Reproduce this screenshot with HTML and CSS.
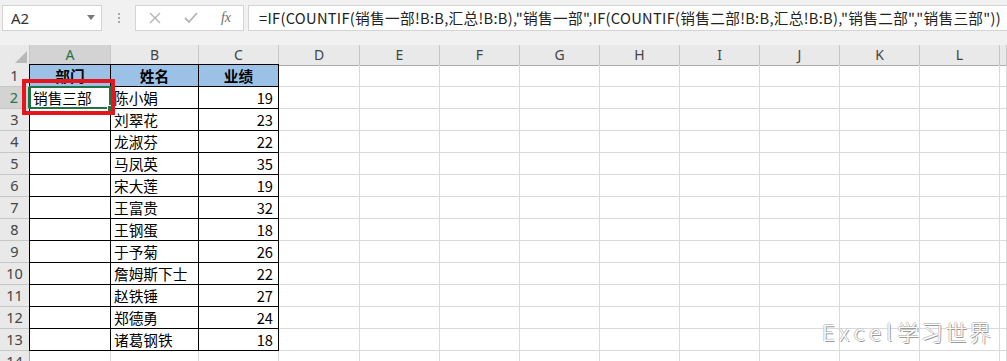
FILE: index.html
```html
<!DOCTYPE html>
<html>
<head>
    <link rel="stylesheet" href="styles.css">
</head>
<body>
    <div class="topbar">
        <div class="namebox">
            <span>A2</span>
            <svg class="drop" width="8" height="5" viewBox="0 0 8 5"><path d="M0 0h8L4 5z" fill="#7a7a7a"/></svg>
        </div>
        <div class="grip"><i></i><i></i><i></i></div>
        <div class="fxbox">
            <svg width="14" height="14" viewBox="0 0 14 14"><path d="M2 2l10 10M12 2L2 12" stroke="#b4b4b4" stroke-width="1.4" fill="none"/></svg>
            <svg width="16" height="14" viewBox="0 0 16 14"><path d="M2 7l4 4 8-9" stroke="#b4b4b4" stroke-width="1.8" fill="none"/></svg>
            <span class="fx">fx</span>
        </div>
        <div class="formula">=IF(COUNTIF(销售一部!B:B,汇总!B:B),"销售一部",IF(COUNTIF(销售二部!B:B,汇总!B:B),"销售二部","销售三部"))</div>
    </div>

    <div class="sheet">
        <div class="row hrow">
            <div class="corner"><svg width="12" height="12" viewBox="0 0 12 12"><path d="M12 0v12H0z" fill="#b8b8b8"/></svg></div>
            <div class="on">A</div><div>B</div><div>C</div><div>D</div><div>E</div><div>F</div><div>G</div><div>H</div><div>I</div><div>J</div><div>K</div><div>L</div><div></div>
        </div>
        <div class="row">
            <div class="rh">1</div><div class="d a top th">部门</div><div class="d top th">姓名</div><div class="d top th">业绩</div>
            <div></div><div></div><div></div><div></div><div></div><div></div><div></div><div></div><div></div><div></div>
        </div>
        <div class="row">
            <div class="rh on">2</div><div class="d a cur">销售三部</div><div class="d">陈小娟</div><div class="d num">19</div>
            <div></div><div></div><div></div><div></div><div></div><div></div><div></div><div></div><div></div><div></div>
        </div>
        <div class="row">
            <div class="rh">3</div><div class="d a"></div><div class="d">刘翠花</div><div class="d num">23</div>
            <div></div><div></div><div></div><div></div><div></div><div></div><div></div><div></div><div></div><div></div>
        </div>
        <div class="row">
            <div class="rh">4</div><div class="d a"></div><div class="d">龙淑芬</div><div class="d num">22</div>
            <div></div><div></div><div></div><div></div><div></div><div></div><div></div><div></div><div></div><div></div>
        </div>
        <div class="row">
            <div class="rh">5</div><div class="d a"></div><div class="d">马凤英</div><div class="d num">35</div>
            <div></div><div></div><div></div><div></div><div></div><div></div><div></div><div></div><div></div><div></div>
        </div>
        <div class="row">
            <div class="rh">6</div><div class="d a"></div><div class="d">宋大莲</div><div class="d num">19</div>
            <div></div><div></div><div></div><div></div><div></div><div></div><div></div><div></div><div></div><div></div>
        </div>
        <div class="row">
            <div class="rh">7</div><div class="d a"></div><div class="d">王富贵</div><div class="d num">32</div>
            <div></div><div></div><div></div><div></div><div></div><div></div><div></div><div></div><div></div><div></div>
        </div>
        <div class="row">
            <div class="rh">8</div><div class="d a"></div><div class="d">王钢蛋</div><div class="d num">18</div>
            <div></div><div></div><div></div><div></div><div></div><div></div><div></div><div></div><div></div><div></div>
        </div>
        <div class="row">
            <div class="rh">9</div><div class="d a"></div><div class="d">于予菊</div><div class="d num">26</div>
            <div></div><div></div><div></div><div></div><div></div><div></div><div></div><div></div><div></div><div></div>
        </div>
        <div class="row">
            <div class="rh">10</div><div class="d a"></div><div class="d">詹姆斯下士</div><div class="d num">22</div>
            <div></div><div></div><div></div><div></div><div></div><div></div><div></div><div></div><div></div><div></div>
        </div>
        <div class="row">
            <div class="rh">11</div><div class="d a"></div><div class="d">赵铁锤</div><div class="d num">27</div>
            <div></div><div></div><div></div><div></div><div></div><div></div><div></div><div></div><div></div><div></div>
        </div>
        <div class="row">
            <div class="rh">12</div><div class="d a"></div><div class="d">郑德勇</div><div class="d num">24</div>
            <div></div><div></div><div></div><div></div><div></div><div></div><div></div><div></div><div></div><div></div>
        </div>
        <div class="row">
            <div class="rh">13</div><div class="d a"></div><div class="d">诸葛钢铁</div><div class="d num">18</div>
            <div></div><div></div><div></div><div></div><div></div><div></div><div></div><div></div><div></div><div></div>
        </div>
        <div class="row">
            <div class="rh">14</div><div></div><div></div><div></div>
            <div></div><div></div><div></div><div></div><div></div><div></div><div></div><div></div><div></div><div></div>
        </div>
    </div>

    <div class="redbox"></div>
    <div class="mark"><span class="en">Excel</span>学习世界</div>
</body>
</html>
```

FILE: styles.css
```css
html, body { margin: 0; height: 100%; overflow: hidden; }
body { font-family: "Noto Sans", "Noto Sans CJK SC", sans-serif; background: #fff; position: relative; }

.topbar { display: flex; align-items: center; height: 45px; padding: 0 0 10px 2px; box-sizing: border-box; background: #f1f1f1; }
.namebox { width: 100px; height: 26px; box-sizing: border-box; border: 1px solid #d4d4d4; background: #fff; display: flex; align-items: center; justify-content: space-between; padding: 0 6px 0 8px; font-size: 15px; color: #333; }
.grip { width: 33px; display: flex; flex-direction: column; align-items: center; gap: 2px; }
.grip i { width: 2px; height: 2px; background: #a8a8a8; }
.fxbox { width: 109px; height: 26px; box-sizing: border-box; border: 1px solid #d4d4d4; background: #fff; display: flex; align-items: center; justify-content: space-between; padding: 0 12px 0 12px; margin-right: 4px; }
.fx { font-family: "Liberation Serif", serif; font-style: italic; font-size: 14px; color: #6e6e6e; }
.formula { flex: 1; height: 26px; box-sizing: border-box; border: 1px solid #d4d4d4; border-right: 0; background: #fff; padding-left: 10px; font-family: "Noto Sans CJK SC", sans-serif; font-size: 14.67px; letter-spacing: 0.3px; line-height: 24px; color: #222; white-space: nowrap; overflow: hidden; }

.row { display: grid; grid-template-columns: 30px 81px 88px 80px 81px repeat(8, 80px) 1fr; height: 22px; }
.row > div { box-sizing: border-box; border-right: 1px solid #dadada; border-bottom: 1px solid #dadada; font-family: "Noto Sans CJK SC", sans-serif; font-size: 14.67px; line-height: 21px; color: #000; white-space: nowrap; }

.hrow { height: 20px; background: #e9e9e9; }
.hrow > div { border-right-color: #c6c6c6; border-bottom-color: #ababab; text-align: center; font-family: "Noto Sans", sans-serif; font-size: 14px; line-height: 19px; color: #444; }
.hrow .corner { display: flex; align-items: flex-end; justify-content: flex-end; padding: 0 2px 2px 0; }
.hrow .on { background: #d3d3d3; color: #217346; border-bottom: 2px solid #217346; }

.row > .rh { background: #e9e9e9; border-right-color: #ababab; border-bottom-color: #c6c6c6; text-align: center; font-family: "Noto Sans", sans-serif; font-size: 14.5px; color: #444; }
.row > .rh.on { background: #d3d3d3; color: #217346; border-right: 2px solid #217346; }

.row > .d { border-right-color: #000; border-bottom-color: #000; padding: 0 3px; }
.row > .a { box-shadow: -1px 0 0 #000; }
.row > .top { box-shadow: 0 -1px 0 #000; }
.row > .a.top { box-shadow: -1px 0 0 #000, 0 -1px 0 #000, -1px -1px 0 #000; }
.row > .th { background: #9bc2e6; font-weight: bold; text-align: center; }
.row > .num { text-align: right; padding-right: 5px; }

.row > .cur { position: relative; }
.cur::before { content: ""; position: absolute; left: -1px; top: -1px; right: -1px; bottom: -1px; border: 2px solid #217346; }
.cur::after { content: ""; position: absolute; right: -4px; bottom: -4px; width: 5px; height: 5px; background: #217346; border: 1px solid #fff; }

.redbox { position: absolute; left: 22px; top: 79px; width: 93px; height: 36px; box-sizing: border-box; border: 4px solid #e5161d; }

.mark { position: absolute; left: 822px; top: 315px; font-family: "Noto Sans CJK SC", sans-serif; font-weight: 300; font-size: 22px; letter-spacing: 2px; color: #fff; text-shadow: 1px 1px 0 #9a9a9a, -1px 0 0 #c8c8c8, 0 -1px 0 #c8c8c8; }
.mark .en { letter-spacing: 5px; }
```
